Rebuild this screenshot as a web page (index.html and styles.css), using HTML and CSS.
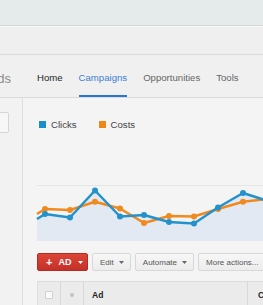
FILE: index.html
```html
<!DOCTYPE html>
<html>
<head>
<meta charset="utf-8">
<link rel="stylesheet" href="styles.css">
</head>
<body>
<div class="page">
  <div class="topbar"></div>
  <div class="subbar"></div>
  <nav class="nav">
    <div class="logo"><span>AdWords</span></div>
    <a class="nav-item home">Home</a>
    <a class="nav-item active">Campaigns</a>
    <a class="nav-item">Opportunities</a>
    <a class="nav-item">Tools</a>
  </nav>
  <div class="body">
    <aside class="sidebar">
      <div class="side-box"></div>
    </aside>
    <main class="main">
      <div class="legend">
        <span class="legend-item"><i class="swatch blue"></i>Clicks</span>
        <span class="legend-item"><i class="swatch orange"></i>Costs</span>
      </div>
      <svg class="chart" width="226" height="62" viewBox="0 0 226 62">
        <line x1="0" y1="3.5" x2="226" y2="3.5" stroke="#e6e6e6" stroke-width="1"/>
        <polygon fill="#e3e9f2" points="0,37 8,32 33,35.5 58,8.5 83,34.5 107,33 132,40 157,41.5 181,25.5 206,11 231,19 231,59 0,59"/>
        <polyline fill="none" stroke="#f08a1e" stroke-width="2.5" stroke-linejoin="round" points="0,32 8,27 33,28 58,19.7 83,26.5 107,41 132,34 157,34.5 181,27 206,19.7 231,17"/>
        <g fill="#f08a1e">
          <circle cx="8" cy="27" r="3"/><circle cx="33" cy="28" r="3"/><circle cx="58" cy="19.7" r="3"/><circle cx="83" cy="26.5" r="3"/><circle cx="107" cy="41" r="3"/><circle cx="132" cy="34" r="3"/><circle cx="157" cy="34.5" r="3"/><circle cx="181" cy="27" r="3"/><circle cx="206" cy="19.7" r="3"/>
        </g>
        <polyline fill="none" stroke="#2392cc" stroke-width="2.5" stroke-linejoin="round" points="0,37 8,32 33,35.5 58,8.5 83,34.5 107,33 132,40 157,41.5 181,25.5 206,11 231,19"/>
        <g fill="#2392cc">
          <circle cx="8" cy="32" r="3"/><circle cx="33" cy="35.5" r="3"/><circle cx="58" cy="8.5" r="3"/><circle cx="83" cy="34.5" r="3"/><circle cx="107" cy="33" r="3"/><circle cx="132" cy="40" r="3"/><circle cx="157" cy="41.5" r="3"/><circle cx="181" cy="25.5" r="3"/><circle cx="206" cy="11" r="3"/>
        </g>
      </svg>
      <div class="toolbar">
        <button class="btn btn-red"><span class="plus">+</span><span>AD</span><svg class="caret" width="5" height="3" viewBox="0 0 5 3"><polygon points="0,0 5,0 2.5,3" fill="#ffffff"/></svg></button>
        <button class="btn">Edit<svg class="caret" width="5" height="3" viewBox="0 0 5 3"><polygon points="0,0 5,0 2.5,3" fill="#666666"/></svg></button>
        <button class="btn">Automate<svg class="caret" width="5" height="3" viewBox="0 0 5 3"><polygon points="0,0 5,0 2.5,3" fill="#666666"/></svg></button>
        <button class="btn">More actions...</button>
      </div>
      <div class="table-head">
        <div class="col col-check"><span class="checkbox"></span></div>
        <div class="col col-dot"><span class="dot"></span></div>
        <div class="col col-ad">Ad</div>
        <div class="col col-c">C</div>
      </div>
    </main>
  </div>
</div>
</body>
</html>
```
FILE: styles.css
```css
* { box-sizing: border-box; }
html, body { margin: 0; padding: 0; }
body {
  font-family: "Liberation Sans", Arial, sans-serif;
  background: #f4f4f4;
  width: 263px;
  height: 305px;
  overflow: hidden;
}
.page { width: 263px; height: 305px; overflow: hidden; display: flex; flex-direction: column; }
.topbar {
  height: 26px;
  background: #e5ebea;
  border-bottom: 1px solid #d6dada;
  flex: none;
}
.subbar {
  height: 29px;
  background: #efefef;
  border-top: 1px solid #f6f6f6;
  border-bottom: 1px solid #dcdcdc;
  flex: none;
}
.nav {
  height: 43px;
  flex: none;
  display: flex;
  align-items: stretch;
  gap: 16px;
  background: #f0f0f0;
  border-bottom: 1px solid #dadada;
}
.logo {
  width: 11px;
  margin-right: 10px;
  display: flex;
  justify-content: flex-end;
  align-items: center;
  padding-top: 4px;
  white-space: nowrap;
  font-size: 13px;
  color: #8a8a8a;
}
.nav-item {
  display: flex;
  align-items: center;
  padding-top: 4px;
  font-size: 9.6px;
  color: #666;
  border-bottom: 2px solid transparent;
  white-space: nowrap;
}
.nav-item.home { color: #262626; }
.nav-item.active { color: #3b7fd4; border-bottom-color: #2a74d2; }
.body { flex: 1; display: flex; min-height: 0; }
.sidebar {
  width: 23px;
  flex: none;
  background: #f2f2f2;
  border-right: 1px solid #dedede;
  overflow: hidden;
  padding-top: 14px;
}
.side-box {
  width: 21px;
  height: 21px;
  margin-left: -12px;
  border: 1px solid #d6d6d6;
  border-radius: 2px;
  background: #f7f7f7;
}
.main {
  flex: 1;
  min-width: 0;
  padding-left: 14px;
  background: #f4f4f4;
  overflow: hidden;
}
.legend {
  margin-top: 20px;
  height: 12px;
  display: flex;
  align-items: center;
  gap: 22px;
  padding-left: 2px;
  font-size: 9.6px;
  color: #444;
}
.legend-item { display: flex; align-items: center; gap: 5px; }
.swatch { display: block; width: 7px; height: 7px; }
.swatch.blue { background: #1a8dcc; }
.swatch.orange { background: #ef8717; }
.chart { display: block; margin-top: 52px; overflow: visible; }
.toolbar {
  margin-top: 9px;
  display: flex;
  gap: 4px;
  white-space: nowrap;
}
.btn {
  height: 18px;
  flex: none;
  display: flex;
  align-items: center;
  gap: 5px;
  padding: 0 6px 0 7px;
  font-family: "Liberation Sans", Arial, sans-serif;
  font-size: 8px;
  color: #555;
  background: linear-gradient(#f7f7f7, #ececec);
  border: 1px solid #d8d8d8;
  border-radius: 2px;
}
.btn-red {
  width: 51px;
  padding: 0 0 0 8px;
  gap: 5px;
  color: #fff;
  font-weight: bold;
  font-size: 9px;
  background: linear-gradient(#dc4636, #c4302a);
  border-color: #b72c22;
}
.btn-red .plus { font-size: 11px; margin-right: 1px; }
.btn-red .caret { margin-left: 2px; }
.caret { display: block; flex: none; }
.table-head {
  margin-top: 10px;
  width: 240px;
  height: 26px;
  display: flex;
  background: #ebebeb;
  border-top: 1px solid #dcdcdc;
  border-left: 1px solid #e0e0e0;
}
.col {
  display: flex;
  align-items: center;
  border-right: 1px solid #d9d9d9;
  font-size: 8.5px;
  font-weight: bold;
  color: #222;
}
.col-check { width: 23px; justify-content: center; }
.col-dot { width: 23px; justify-content: center; }
.col-ad { width: 164px; padding-left: 8px; }
.col-c { flex: 1; padding-left: 10px; border-right: none; }
.checkbox {
  width: 8px; height: 8px;
  background: #fafafa;
  border: 1px solid #d0d0d0;
  border-radius: 1px;
}
.dot { width: 4px; height: 4px; border-radius: 50%; background: #c2c2c2; }
```
